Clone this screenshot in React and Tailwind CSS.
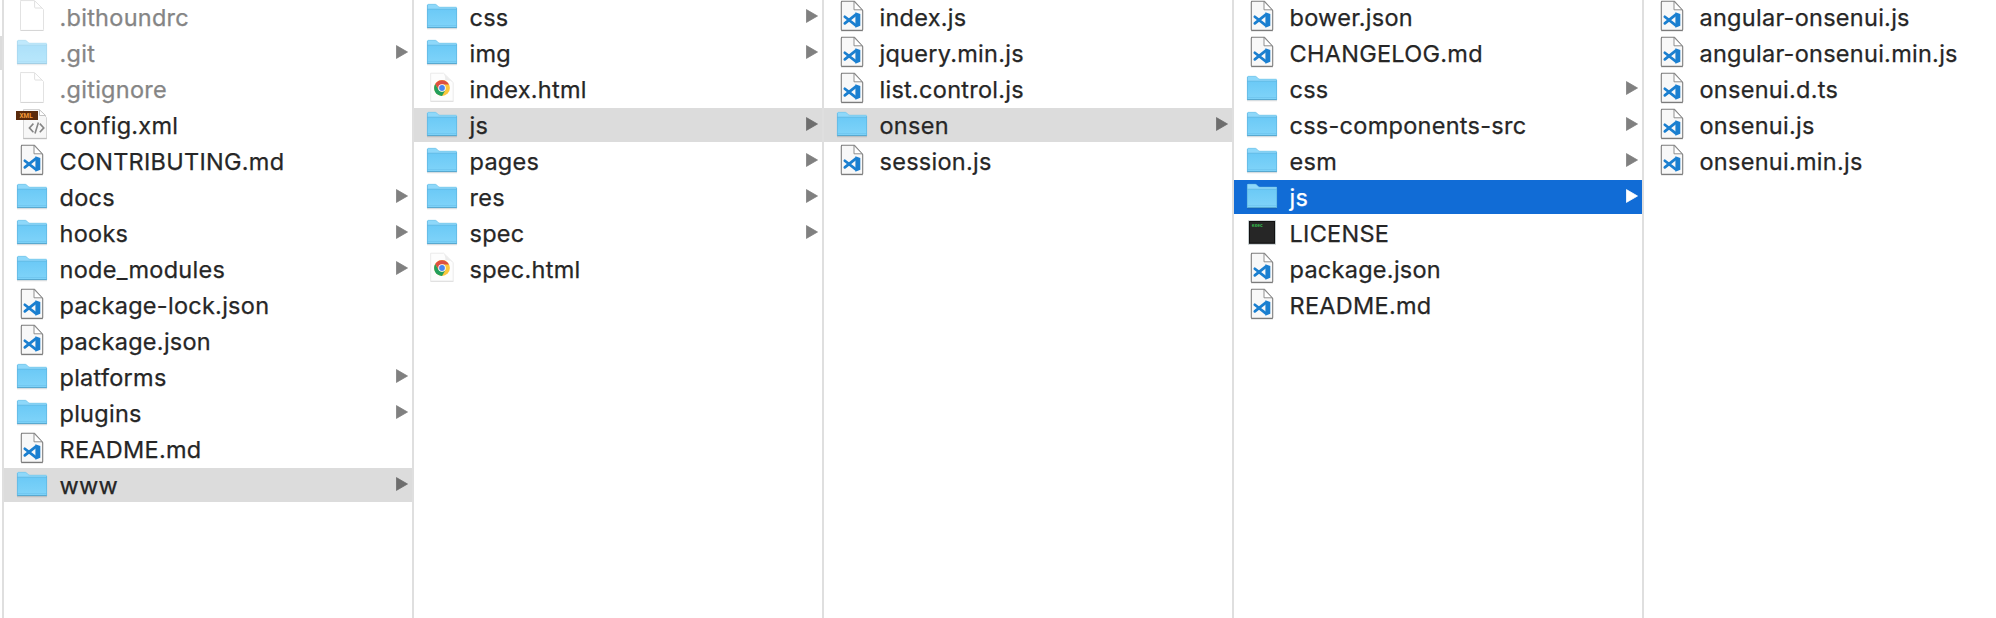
function Folder() {
  return (
    <svg width="34" height="36" viewBox="0 0 34 36" className="block">
      <defs>
        <linearGradient id="folderFront" x1="0" y1="0" x2="0" y2="1">
          <stop offset="0" stopColor="#6bc9f6" />
          <stop offset="1" stopColor="#80d4f9" />
        </linearGradient>
      </defs>
      <path d="M2 28.2H32V29Q32 29.2 31.5 29.2H2.5Q2 29.2 2 29Z" fill="#000" opacity=".14" />
      <path d="M2 5.2Q2 4 3.2 4H10Q11 4 11.7 4.8L13 6.2Q13.7 7 14.8 7H31Q32 7 32 8V28H2Z" fill="#8ed8fa" />
      <path d="M2 9H32V27.3Q32 28 31.3 28H2.7Q2 28 2 27.3Z" fill="url(#folderFront)" />
      <path d="M2 9.2H32" stroke="#62b9e2" strokeWidth=".8" />
      <path d="M2.5 25.6H31.5" stroke="#6cc2ec" strokeWidth=".7" />
      <path d="M2 27.6H32" stroke="#4f9fc6" strokeWidth=".9" />
      <path d="M2.4 5V28M31.6 8V28" stroke="#5fb5df" strokeWidth=".7" />
      <path d="M3 4.3H10.3Q11 4.3 11.7 5L13 6.4Q13.7 7.2 14.8 7.2H31.5" fill="none" stroke="#72c2e6" strokeWidth=".6" />
    </svg>
  );
}

function Blank() {
  return (
    <svg width="34" height="36" viewBox="0 0 34 36" className="block">
      <path d="M5.5 .6H19.5L28.5 9.5V29.6Q28.5 30.4 27.7 30.4H6.3Q5.5 30.4 5.5 29.6V1.4Q5.5 .6 6.3 .6Z" fill="#fff" stroke="#e2e2e2" strokeWidth="1" />
      <path d="M5.5 30.5H28.5" stroke="#d4d4d4" strokeWidth=".9" />
      <path d="M19.6 1V7Q19.6 8 20.6 8H27" fill="none" stroke="#dcdcdc" strokeWidth=".9" />
    </svg>
  );
}

function Code() {
  return (
    <svg width="34" height="36" viewBox="0 0 34 36" className="block">
      <path d="M6 30.9H28" stroke="#000" strokeOpacity=".2" strokeWidth="1" />
      <path d="M6.5 1.3H19.5L27.7 10.5V29.4Q27.7 30.4 26.7 30.4H7.3Q6.3 30.4 6.3 29.4V2.3Q6.3 1.3 7.3 1.3Z" fill="#f8f8f8" stroke="#7c7c7c" strokeWidth="1.1" strokeLinejoin="round" />
      <path d="M19 1.4V9.8H27.2Z" fill="#fff" stroke="#858585" strokeWidth=".9" strokeLinejoin="round" />
      <path d="M9.8 16.8L20.8 25.4M9.8 23.4L20.8 14.6" fill="none" stroke="#1a7fd0" strokeWidth="2.7" strokeLinecap="round" />
      <path d="M20.4 12.3L25.3 13.9V25.8L20.4 27.8Z" fill="#1a7fd0" />
    </svg>
  );
}

function Xml() {
  return (
    <svg width="34" height="36" viewBox="0 0 34 36" className="block overflow-visible">
      <path d="M8.5 1.5H24L31.5 9.5V30.3H8.5Z" fill="#f7f7f7" stroke="#cfcfcf" strokeWidth=".9" />
      <path d="M8.2 30.7H31.8" stroke="#b4b4b4" strokeWidth=".9" />
      <path d="M24.5 1.8V7.5H30.6Z" fill="#fff" stroke="#bdbdbd" strokeWidth=".9" />
      <path d="M18.4 15.6L14.4 19.9L18.4 24.2M24.8 15.6L28.8 19.9L24.8 24.2M23.4 14.4L20 25.6" fill="none" stroke="#858585" strokeWidth="1.6" />
      <rect x="1" y="3" width="22" height="9" fill="#5a2a0b" />
      <text x="4.6" y="10.1" fontSize="7" fontWeight="700" fontFamily="Roboto, sans-serif" fill="#f29a38" textLength="13" lengthAdjust="spacingAndGlyphs">XML</text>
    </svg>
  );
}

function Chrome() {
  return (
    <svg width="34" height="36" viewBox="0 0 34 36" className="block">
      <path d="M5.7 1.2H18.6L28.2 10.5V29.2H5.7Z" fill="#fdfdfd" stroke="#e9e9e9" strokeWidth=".9" />
      <path d="M5.5 29.4H28.4" stroke="#dadada" strokeWidth=".8" />
      <path d="M19 1.5Q20.8 5.8 20.3 8.5Q24.5 7.5 28 10.5Z" fill="#ececec" />
      <circle cx="17" cy="16" r="7.9" fill="#fbc73c" />
      <path d="M10.16 12.05A7.9 7.9 0 0 1 24 12.4H17L13.8 18Z" fill="#de4f41" />
      <path d="M10.16 12.05A7.9 7.9 0 0 0 17 23.9L20.4 18L17 19.7L13.6 18Z" fill="#239f5c" />
      <circle cx="17" cy="16" r="3.8" fill="#fff" />
      <circle cx="17" cy="16" r="2.9" fill="#4a86ee" />
    </svg>
  );
}

function Exec() {
  return (
    <svg width="34" height="36" viewBox="0 0 34 36" className="block">
      <rect x="3" y="4.2" width="28" height="24.6" rx=".5" fill="#c4ccce" />
      <rect x="4" y="5" width="26" height="22.8" fill="#101010" />
      <rect x="5" y="6" width="24" height="20.6" fill="#262626" />
      <text x="6.8" y="11.2" fontSize="4.6" fontWeight="700" fontFamily="Liberation Mono, monospace" fill="#35c24e" textLength="11">exec</text>
    </svg>
  );
}

const ICONS = { folder: Folder, blank: Blank, code: Code, xml: Xml, chrome: Chrome, exec: Exec };

const COLUMNS = [
  [
    ["blank", ".bithoundrc", "dim"],
    ["folder", ".git", "dim"],
    ["blank", ".gitignore", "dim"],
    ["xml", "config.xml"],
    ["code", "CONTRIBUTING.md"],
    ["folder", "docs"],
    ["folder", "hooks"],
    ["folder", "node_modules"],
    ["code", "package-lock.json"],
    ["code", "package.json"],
    ["folder", "platforms"],
    ["folder", "plugins"],
    ["code", "README.md"],
    ["folder", "www", "path"],
  ],
  [
    ["folder", "css"],
    ["folder", "img"],
    ["chrome", "index.html"],
    ["folder", "js", "path"],
    ["folder", "pages"],
    ["folder", "res"],
    ["folder", "spec"],
    ["chrome", "spec.html"],
  ],
  [
    ["code", "index.js"],
    ["code", "jquery.min.js"],
    ["code", "list.control.js"],
    ["folder", "onsen", "path"],
    ["code", "session.js"],
  ],
  [
    ["code", "bower.json"],
    ["code", "CHANGELOG.md"],
    ["folder", "css"],
    ["folder", "css-components-src"],
    ["folder", "esm"],
    ["folder", "js", "active"],
    ["exec", "LICENSE"],
    ["code", "package.json"],
    ["code", "README.md"],
  ],
  [
    ["code", "angular-onsenui.js"],
    ["code", "angular-onsenui.min.js"],
    ["code", "onsenui.d.ts"],
    ["code", "onsenui.js"],
    ["code", "onsenui.min.js"],
  ],
];

const ROW_STYLES = {
  normal: "text-[#262626]",
  dim: "text-[#858585]",
  path: "bg-[#dcdcdc] text-[#262626]",
  active: "bg-[#116cd6] text-white",
};

const ARROW_STYLES = {
  normal: "text-[#808080]",
  dim: "text-[#808080]",
  path: "text-[#6e6e6e]",
  active: "text-white",
};

function Row({ icon, name, state = "normal" }) {
  const Icon = ICONS[icon];
  return (
    <li className={`flex h-[34px] items-start pl-[11px] pr-1 ${ROW_STYLES[state]}`}>
      <span className={`w-[34px] shrink-0 ${state === "dim" && icon === "folder" ? "opacity-55" : ""}`}>
        <Icon />
      </span>
      <span className="ml-[10.5px] flex-1 whitespace-nowrap text-[23.5px] leading-[35px] tracking-[0.27px] [-webkit-text-stroke:0.25px_currentColor]">{name}</span>
      {icon === "folder" && (
        <svg width="12" height="32" viewBox="0 0 12 32" className={`shrink-0 ${ARROW_STYLES[state]}`}>
          <path d="M.4 9.6L11.5 16L.4 22.4Z" fill="currentColor" stroke="currentColor" strokeWidth=".8" strokeLinejoin="round" />
        </svg>
      )}
    </li>
  );
}

export default function App() {
  return (
    <main className="flex h-[618px] w-[1996px] overflow-hidden bg-white font-['Inter',sans-serif]">
      <div className="w-[2px] shrink-0 pt-9">
        <div className="h-[34px] bg-[#dcdcdc]" />
      </div>
      {COLUMNS.map((items, i) => (
        <ul key={i} className="flex w-[410px] shrink-0 flex-col gap-[2px] border-l-2 border-[#dfdfdf]">
          {items.map(([icon, name, state]) => (
            <Row key={name} icon={icon} name={name} state={state} />
          ))}
        </ul>
      ))}
    </main>
  );
}
